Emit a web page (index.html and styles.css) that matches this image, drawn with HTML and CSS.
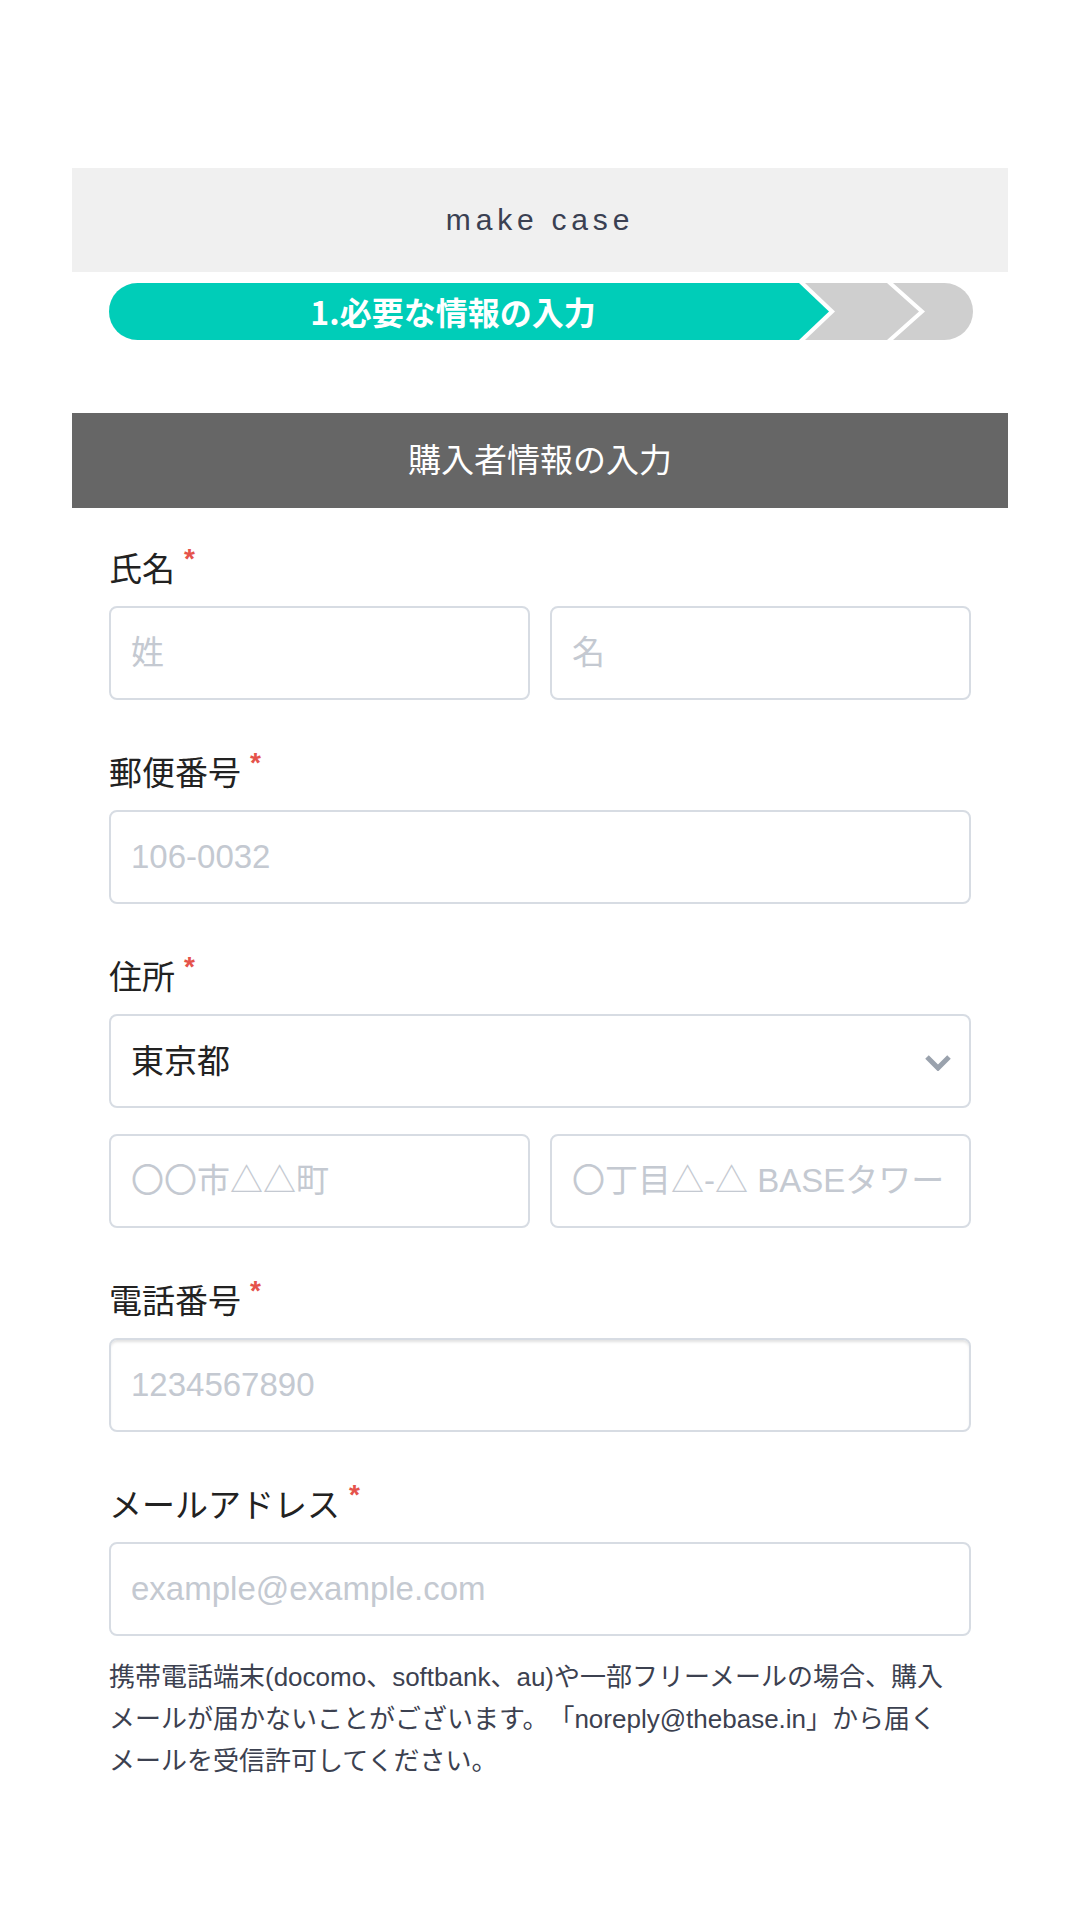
FILE: index.html
```html
<!DOCTYPE html>
<html lang="ja">

<head>
  <meta charset="UTF-8">
  <title>購入者情報の入力 | make case</title>
  <link rel="stylesheet" href="styles.css">
</head>

<body>
  <div class="page">
    <header class="shop-header">make case</header>

    <div class="steps">
      <svg class="steps-bg" viewBox="0 0 864 57" preserveAspectRatio="none">
        <defs>
          <clipPath id="pill">
            <rect x="0" y="0" width="864" height="57" rx="28.5" ry="28.5" />
          </clipPath>
        </defs>
        <g clip-path="url(#pill)">
          <rect x="0" y="0" width="864" height="57" fill="#cfcfcf" />
          <polygon points="0,0 696,0 726,28.5 696,57 0,57" fill="#fff" />
          <polygon points="0,0 690,0 720,28.5 690,57 0,57" fill="#00cdb8" />
          <polygon points="778,0 784,0 816,28.5 784,57 778,57 810,28.5" fill="#fff" />
        </g>
      </svg>
      <div class="steps-label">1.必要な情報の入力</div>
    </div>

    <h2 class="section-title">購入者情報の入力</h2>

    <form class="form">
      <div class="field">
        <div class="label">氏名<span class="required">*</span></div>
        <div class="row">
          <input class="input" type="text" placeholder="姓">
          <input class="input" type="text" placeholder="名">
        </div>
      </div>

      <div class="field">
        <div class="label">郵便番号<span class="required">*</span></div>
        <input class="input" type="text" placeholder="106-0032">
      </div>

      <div class="field">
        <div class="label">住所<span class="required">*</span></div>
        <div class="select-wrap">
          <select class="input select">
            <option>東京都</option>
          </select>
          <svg class="select-arrow" viewBox="0 0 28 17">
            <polyline points="3,3 14,14 25,3" fill="none" stroke="#9aa2ad" stroke-width="5" />
          </svg>
        </div>
        <div class="row row-gap">
          <input class="input" type="text" placeholder="〇〇市△△町">
          <input class="input" type="text" placeholder="〇丁目△-△ BASEタワー">
        </div>
      </div>

      <div class="field">
        <div class="label">電話番号<span class="required">*</span></div>
        <input class="input input-shadow" type="tel" placeholder="1234567890">
      </div>

      <div class="field">
        <div class="label">メールアドレス<span class="required">*</span></div>
        <input class="input" type="email" placeholder="example@example.com">
        <p class="note">携帯電話端末(docomo、softbank、au)や一部フリーメールの場合、購入メールが届かないことがございます。「noreply@thebase.in」から届くメールを受信許可してください。</p>
      </div>
    </form>
  </div>
</body>

</html>
```

FILE: styles.css
```css
body {
  margin: 0;
  background: #fff;
  font-family: "Liberation Sans", "Noto Sans CJK JP", sans-serif;
  color: #222;
}

.page {
  width: 936px;
  margin: 168px auto 0;
}

.shop-header {
  height: 104px;
  line-height: 104px;
  background: #f0f0f0;
  text-align: center;
  font-size: 30px;
  letter-spacing: 4.8px;
  color: #3a4052;
}

/* steps */
.steps {
  position: relative;
  height: 57px;
  margin: 11px 35px 0 37px;
  display: flex;
}

.steps-bg {
  position: absolute;
  top: 0;
  left: 0;
  width: 100%;
  height: 100%;
}

.steps-label {
  position: relative;
  width: 688px;
  line-height: 57px;
  text-align: center;
  font-family: "Noto Sans CJK JP", sans-serif;
  font-weight: 700;
  font-size: 32px;
  color: #fff;
}

.section-title {
  margin: 73px 0 0;
  height: 95px;
  line-height: 95px;
  background: #666;
  color: #fff;
  text-align: center;
  font-weight: 400;
  font-size: 33px;
}

/* form */
.form {
  padding: 0 37px;
}

.field {
  margin-top: 50px;
}

.field:first-child {
  margin-top: 38px;
}

.label {
  font-size: 33px;
  line-height: 48px;
  margin-bottom: 12px;
  color: #222;
}

.required {
  display: inline-block;
  vertical-align: top;
  margin-left: 9px;
  font-size: 28px;
  font-weight: 700;
  line-height: 26px;
  color: #e5534b;
}

.row {
  display: grid;
  grid-template-columns: 1fr 1fr;
  gap: 20px;
}

.row-gap {
  margin-top: 26px;
}

.input {
  display: block;
  width: 100%;
  height: 94px;
  box-sizing: border-box;
  margin: 0;
  padding: 0 20px;
  border: 2px solid #d7dce3;
  border-radius: 8px;
  background: #fff;
  font-family: "Liberation Sans", "Noto Sans CJK JP", sans-serif;
  font-size: 33px;
  color: #222;
  outline: none;
}

.input::placeholder {
  color: #c4c9d1;
}

.input-shadow {
  box-shadow: inset 0 3px 3px -1px rgba(0, 0, 0, 0.12);
}

.select-wrap {
  position: relative;
}

.select {
  -webkit-appearance: none;
  appearance: none;
}

.select-arrow {
  position: absolute;
  top: 40px;
  right: 19px;
  width: 28px;
  height: 17px;
  pointer-events: none;
}

.note {
  margin: 20px 0 0;
  padding-right: 10px;
  font-size: 26px;
  line-height: 42px;
  color: #3c4150;
  text-spacing-trim: space-all;
}
```
